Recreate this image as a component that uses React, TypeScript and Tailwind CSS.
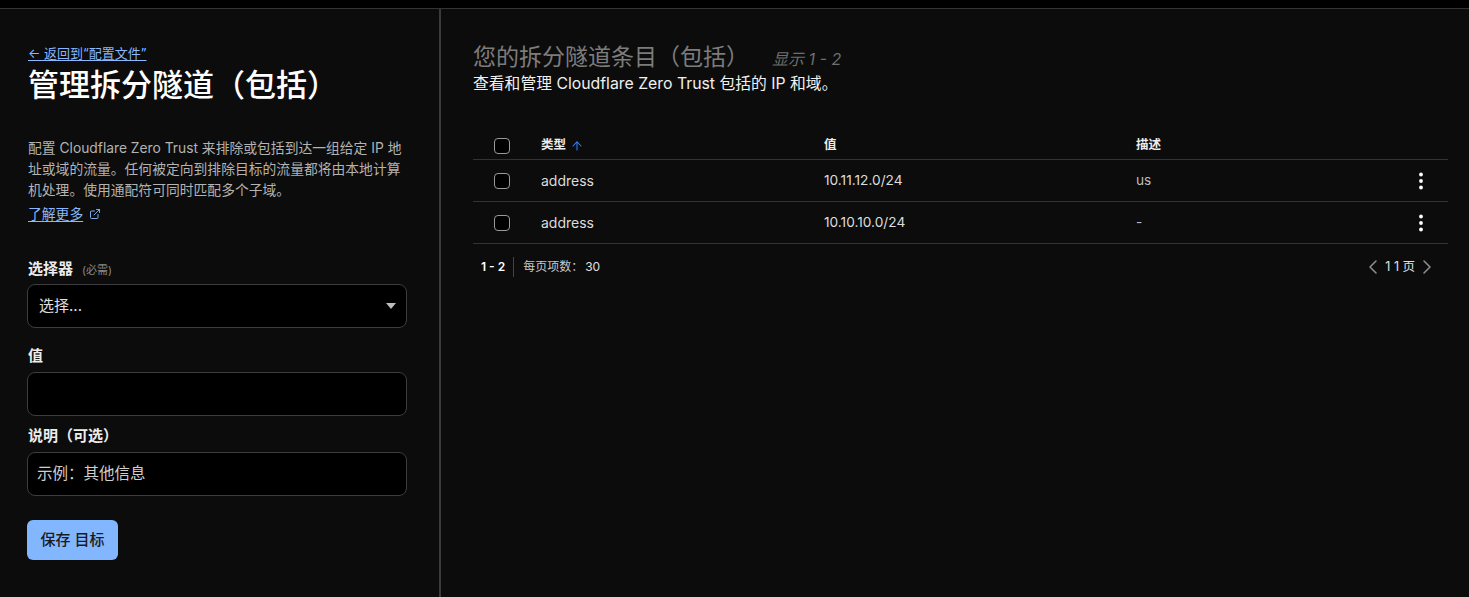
import { ArrowUp, ExternalLink } from 'lucide-react';

const font = { fontFamily: 'Inter, "Noto Sans CJK SC", sans-serif' };

const rows = [
  { type: 'address', value: '10.11.12.0/24', desc: 'us' },
  { type: 'address', value: '10.10.10.0/24', desc: '-' },
];

function Checkbox() {
  return <span className="block w-[16px] h-[16px] rounded-[4px] border border-[#9a9a9a] bg-black" />;
}

function Kebab() {
  return (
    <svg width="6" height="18" viewBox="0 0 6 18" className="text-white">
      <circle cx="3" cy="2.5" r="1.9" fill="currentColor" />
      <circle cx="3" cy="9" r="1.9" fill="currentColor" />
      <circle cx="3" cy="15.5" r="1.9" fill="currentColor" />
    </svg>
  );
}

function Chevron({ dir }: { dir: 'left' | 'right' }) {
  return (
    <svg width="10" height="14" viewBox="0 0 10 14" fill="none" stroke="#8f8f8f" strokeWidth="1.5" strokeLinecap="round" strokeLinejoin="round">
      {dir === 'left' ? <path d="M8 1 L2 7 L8 13" /> : <path d="M2 1 L8 7 L2 13" />}
    </svg>
  );
}

export default function App() {
  return (
    <div style={font} className="w-[1469px] h-[597px] overflow-hidden bg-[#0c0c0c] text-[#e8e8e8] flex flex-col">
      <div className="h-[9px] bg-black border-b border-[#343434] shrink-0" />
      <div className="flex flex-1 min-h-0">
        <aside className="w-[441px] shrink-0 border-r-2 border-[#3a3a3a] pl-[27px] pr-[33px] pt-[35px]">
          <a className="block pl-px text-[13px] leading-[18px] text-[#8ab8ff] underline underline-offset-2">← 返回到“配置文件”</a>
          <h1 className="mt-[4px] pl-px text-[31px] leading-[38px] font-medium text-white">管理拆分隧道（包括）</h1>
          <p className="mt-[34px] pl-px w-[381px] text-[13.8px] leading-[21px] text-[#b3b3b3]">
            配置 Cloudflare Zero Trust 来排除或包括到达一组给定 IP 地址或域的流量。任何被定向到排除目标的流量都将由本地计算机处理。使用通配符可同时匹配多个子域。
          </p>
          <a className="mt-[1px] ml-px inline-flex items-center gap-[6px] text-[13.8px] leading-[20px] text-[#8ab8ff] underline underline-offset-2">
            了解更多 <ExternalLink size={12} strokeWidth={1.8} />
          </a>
          <div className="mt-[33px] pl-px flex items-baseline gap-[9px]">
            <span className="text-[15px] leading-[22px] font-semibold text-[#ececec]">选择器</span>
            <span className="text-[11px] text-[#8a8a8a]">(必需)</span>
          </div>
          <div className="mt-[4px] h-[44px] w-[380px] rounded-lg border border-[#3d3d3d] bg-black flex items-center justify-between pl-[11px] pr-[10px]">
            <span className="text-[15px] text-[#e0e0e0]">选择...</span>
            <span className="w-0 h-0 border-l-[5px] border-r-[5px] border-t-[6px] border-l-transparent border-r-transparent border-t-[#bdbdbd]" />
          </div>
          <div className="mt-[17px] pl-px text-[15px] font-semibold text-[#ececec] leading-[22px]">值</div>
          <div className="mt-[5px] h-[44px] w-[380px] rounded-lg border border-[#3d3d3d] bg-black" />
          <div className="mt-[9px] pl-px text-[15px] font-semibold text-[#ececec] leading-[22px]">说明（可选）</div>
          <div className="mt-[5px] h-[44px] w-[380px] rounded-lg border border-[#3d3d3d] bg-black flex items-center pl-[9px]">
            <span className="text-[15.5px] text-[#cfcfcf]">示例：其他信息</span>
          </div>
          <button className="mt-[24px] h-[40px] w-[91px] rounded-md bg-[#82b6ff] text-[15px] font-medium text-[#1b1b1b]">
            保存 目标
          </button>
        </aside>
        <main className="flex-1 pl-[32px] pr-[21px] pt-[33px]">
          <div className="flex items-baseline gap-[23px]">
            <h2 className="text-[23px] leading-[30px] text-[#7c7c7c]">您的拆分隧道条目（包括）</h2>
            <span className="text-[16px] italic text-[#6f6f6f]">显示 1 - 2</span>
          </div>
          <p className="mt-[2px] text-[15.8px] leading-[20px] text-[#f0f0f0]">查看和管理 Cloudflare Zero Trust 包括的 IP 和域。</p>
          <div className="mt-[38px]">
            <div className="flex items-center h-[28px] border-b border-[#333]">
              <div className="w-[68px] pl-[21px] flex items-center"><Checkbox /></div>
              <div className="w-[283px] flex items-center gap-[4px] text-[12.5px] font-semibold text-[#ececec]">
                类型 <ArrowUp size={14} className="text-[#2f7fff]" strokeWidth={1.8} />
              </div>
              <div className="w-[312px] text-[12.5px] font-semibold text-[#ececec]">值</div>
              <div className="flex-1 text-[12.5px] font-semibold text-[#ececec]">描述</div>
            </div>
            {rows.map((r) => (
              <div key={r.value} className="flex items-center h-[42px] border-b border-[#333]">
                <div className="w-[68px] pl-[21px] flex items-center"><Checkbox /></div>
                <div className="w-[283px] text-[14px] text-[#dcdcdc]">{r.type}</div>
                <div className="w-[312px] text-[13.7px] text-[#dcdcdc]">{r.value}</div>
                <div className="flex-1 text-[13.7px] text-[#bdbdbd]">{r.desc}</div>
                <div className="w-[40px] flex justify-center pr-[14px]">
                  <Kebab />
                </div>
              </div>
            ))}
            <div className="flex items-center justify-between h-[46px]">
              <div className="flex items-center text-[12px]">
                <span className="font-semibold text-white pl-[8px] pr-[8px]">1 - 2</span>
                <span className="h-[20px] border-l border-[#444]" />
                <span className="pl-[9px] text-[#c8c8c8]">每页项数：</span>
                <span className="pl-[2px] text-[#e0e0e0]">30</span>
              </div>
              <div className="flex items-center gap-[7px] pr-[16px] text-[12.5px] text-[#e0e0e0]">
                <Chevron dir="left" />
                <span>1 1 页</span>
                <Chevron dir="right" />
              </div>
            </div>
          </div>
        </main>
      </div>
    </div>
  );
}
